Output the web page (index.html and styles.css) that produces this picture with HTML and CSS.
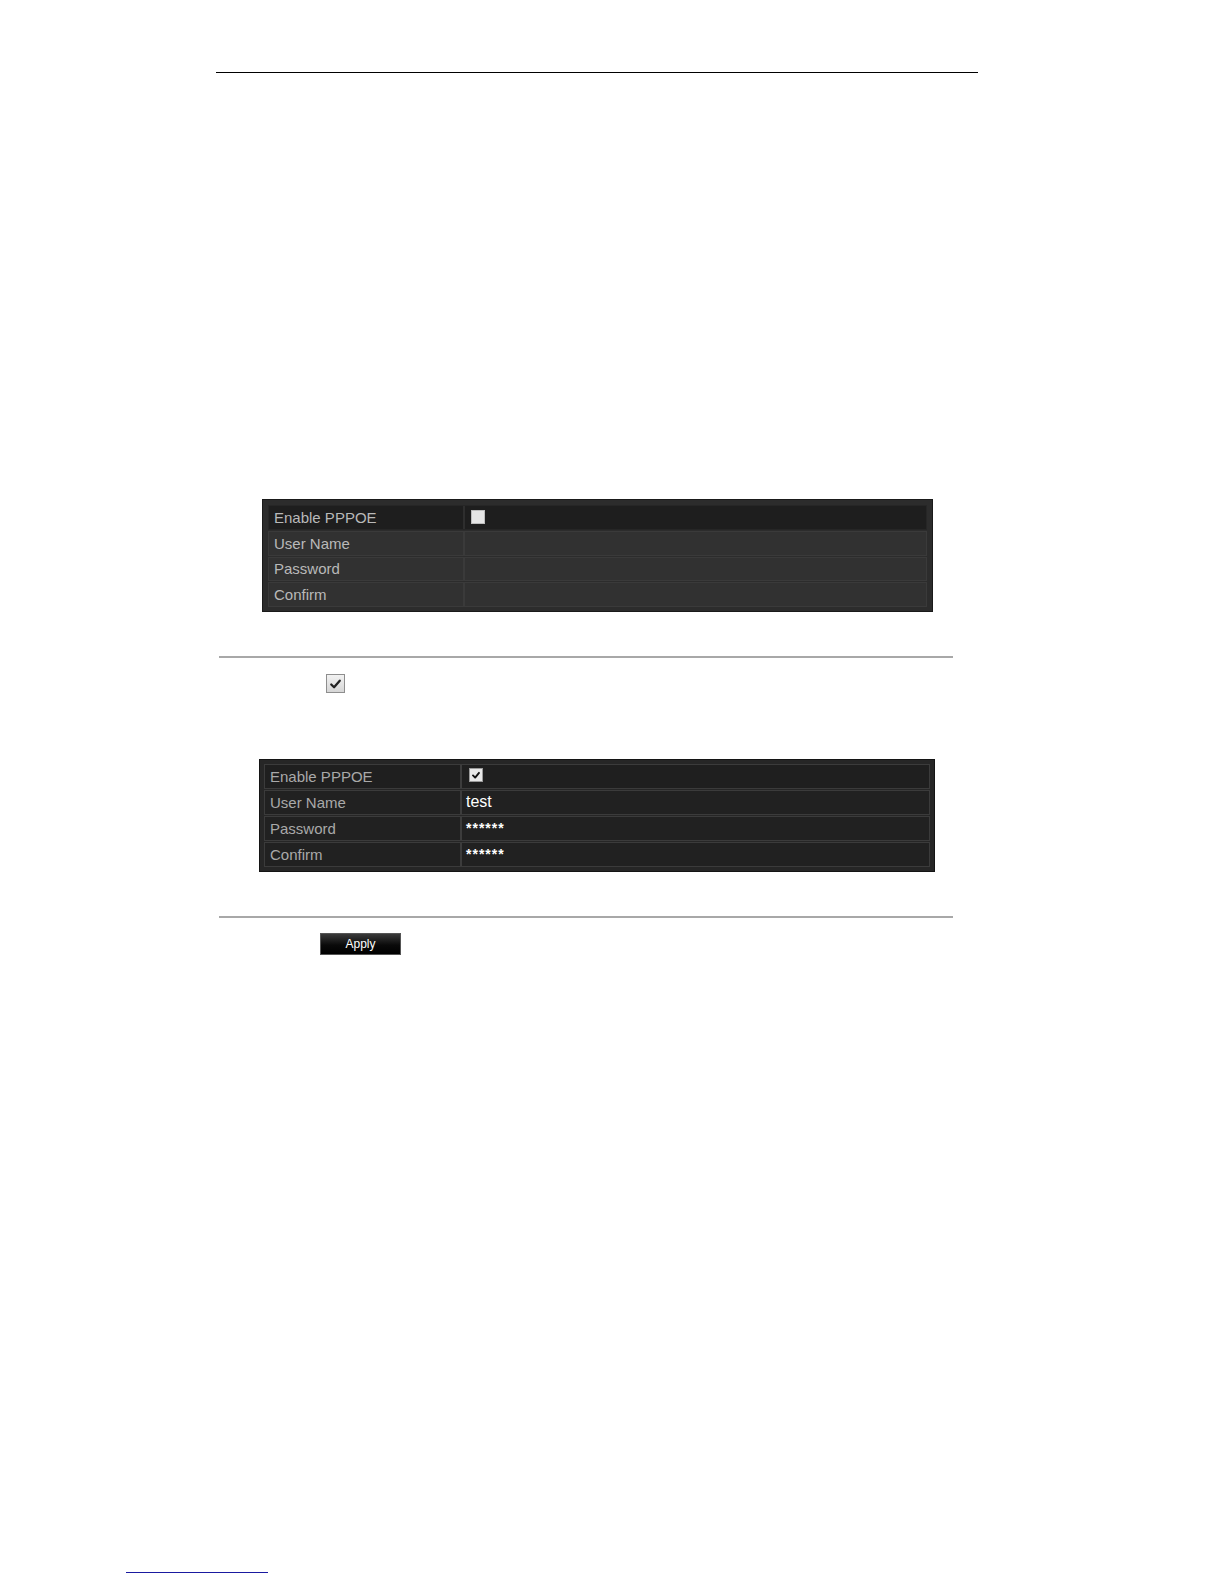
FILE: index.html
```html
<!DOCTYPE html>
<html>
<head>
<meta charset="utf-8">
<link rel="stylesheet" href="styles.css">
</head>
<body>
<div class="page">
  <div class="top-rule"></div>

  <div class="panel panel-a">
    <div class="row row-first">
      <div class="label">Enable PPPOE</div>
      <div class="value"><span class="box box-empty"></span></div>
    </div>
    <div class="row"><div class="label">User Name</div><div class="value"></div></div>
    <div class="row"><div class="label">Password</div><div class="value"></div></div>
    <div class="row"><div class="label">Confirm</div><div class="value"></div></div>
  </div>

  <div class="sep sep-1"></div>

  <div class="step step-check">
    <span class="inline-check">
      <svg viewBox="0 0 18 18" width="18" height="18"><path d="M4.5 9.5 L7.5 12.5 L13.5 5.5" fill="none" stroke="#222" stroke-width="2.4" stroke-linecap="round" stroke-linejoin="round"/></svg>
    </span>
  </div>

  <div class="panel panel-b">
    <div class="row row-first">
      <div class="label">Enable PPPOE</div>
      <div class="value"><span class="box box-checked"><svg viewBox="0 0 14 14" width="12" height="12"><path d="M3.5 7.5 L6 10 L10.5 4.5" fill="none" stroke="#111" stroke-width="2.2" stroke-linecap="round" stroke-linejoin="round"/></svg></span></div>
    </div>
    <div class="row"><div class="label">User Name</div><div class="value val-text">test</div></div>
    <div class="row"><div class="label">Password</div><div class="value val-pass">******</div></div>
    <div class="row"><div class="label">Confirm</div><div class="value val-pass">******</div></div>
  </div>

  <div class="sep sep-2"></div>

  <div class="step step-apply">
    <span class="apply-btn">Apply</span>
  </div>

  <div class="foot-rule"></div>
</div>
</body>
</html>
```

FILE: styles.css
```css
html, body {
  margin: 0;
  padding: 0;
  background: #ffffff;
}

.page {
  width: 1224px;
  height: 1584px;
  font-family: "Liberation Sans", Arial, sans-serif;
  display: flow-root;
}

.top-rule {
  margin: 72px 0 0 216px;
  width: 762px;
  height: 1px;
  background: #000;
}

.panel {
  box-sizing: border-box;
  display: flex;
  flex-direction: column;
  padding: 5px 5px 4px 5px;
}

.panel-a {
  margin: 426px 0 0 262px;
  width: 671px;
  height: 113px;
  background: #2c2c2c;
  border: 1px solid #1a1a1a;
  gap: 1px;
}

.panel-b {
  margin: 66px 0 0 259px;
  width: 676px;
  height: 113px;
  background: #262626;
  border: 1px solid #141414;
  gap: 1px;
  padding: 4px;
}

.row {
  flex: 1;
  display: flex;
  align-items: stretch;
}

.panel-a .row {
  background: #313131;
  border: 1px solid #3a3a3a;
}

.panel-a .row-first {
  background: #1e1e1e;
  border-color: #262626;
}

.panel-b .row {
  background: #212121;
  border: 1px solid #3b3b3b;
}

.panel-b .row-first {
  background: #1f1f1f;
}

.label {
  width: 196px;
  box-sizing: border-box;
  padding-left: 5px;
  display: flex;
  align-items: center;
  color: #b9b9b9;
  font-size: 15px;
  border-right: 2px solid #3a3a3a;
}

.panel-a .row-first .label {
  border-right-color: #2e2e2e;
}

.panel-b .label {
  width: 197px;
  color: #a9a9a9;
  border-right-color: #3c3c3c;
}

.value {
  flex: 1;
  display: flex;
  align-items: center;
  padding-left: 6px;
}

.panel-b .value {
  padding-left: 4px;
}

.box {
  display: inline-flex;
  align-items: center;
  justify-content: center;
  width: 14px;
  height: 14px;
  box-sizing: border-box;
}

.box-empty {
  background: #e6e6e6;
  border: 1px solid #bdbdbd;
  margin-top: -1px;
}

.box-checked {
  background: #e8e8e8;
  border: 1px solid #9a9a9a;
  margin-top: -3px;
  margin-left: 3px;
}

.val-text {
  color: #ffffff;
  font-size: 16px;
  padding-bottom: 2px;
}

.val-pass {
  color: #ffffff;
  font-size: 14px;
  font-weight: bold;
  letter-spacing: 1px;
  align-items: flex-start;
  padding-top: 4px;
  line-height: 14px;
}

.sep {
  margin-left: 219px;
  width: 734px;
  height: 2px;
  background: #a8a8a8;
}

.sep-1 {
  margin-top: 44px;
}

.sep-2 {
  margin-top: 44px;
}

.step {
  display: flex;
}

.step-check {
  margin: 16px 0 0 326px;
}

.inline-check {
  display: inline-flex;
  align-items: center;
  justify-content: center;
  width: 19px;
  height: 19px;
  box-sizing: border-box;
  background: linear-gradient(#f2f2f2, #d6d6d6);
  border: 1px solid #8e8e8e;
}

.step-apply {
  margin: 15px 0 0 320px;
}

.apply-btn {
  display: inline-flex;
  align-items: center;
  justify-content: center;
  width: 81px;
  height: 22px;
  box-sizing: border-box;
  background: linear-gradient(#3a3a3a, #0a0a0a 55%, #000);
  border: 1px solid #555;
  color: #fff;
  font-size: 12px;
}

.foot-rule {
  margin: 617px 0 0 126px;
  width: 142px;
  height: 1px;
  background: #1a1aa0;
}
```
